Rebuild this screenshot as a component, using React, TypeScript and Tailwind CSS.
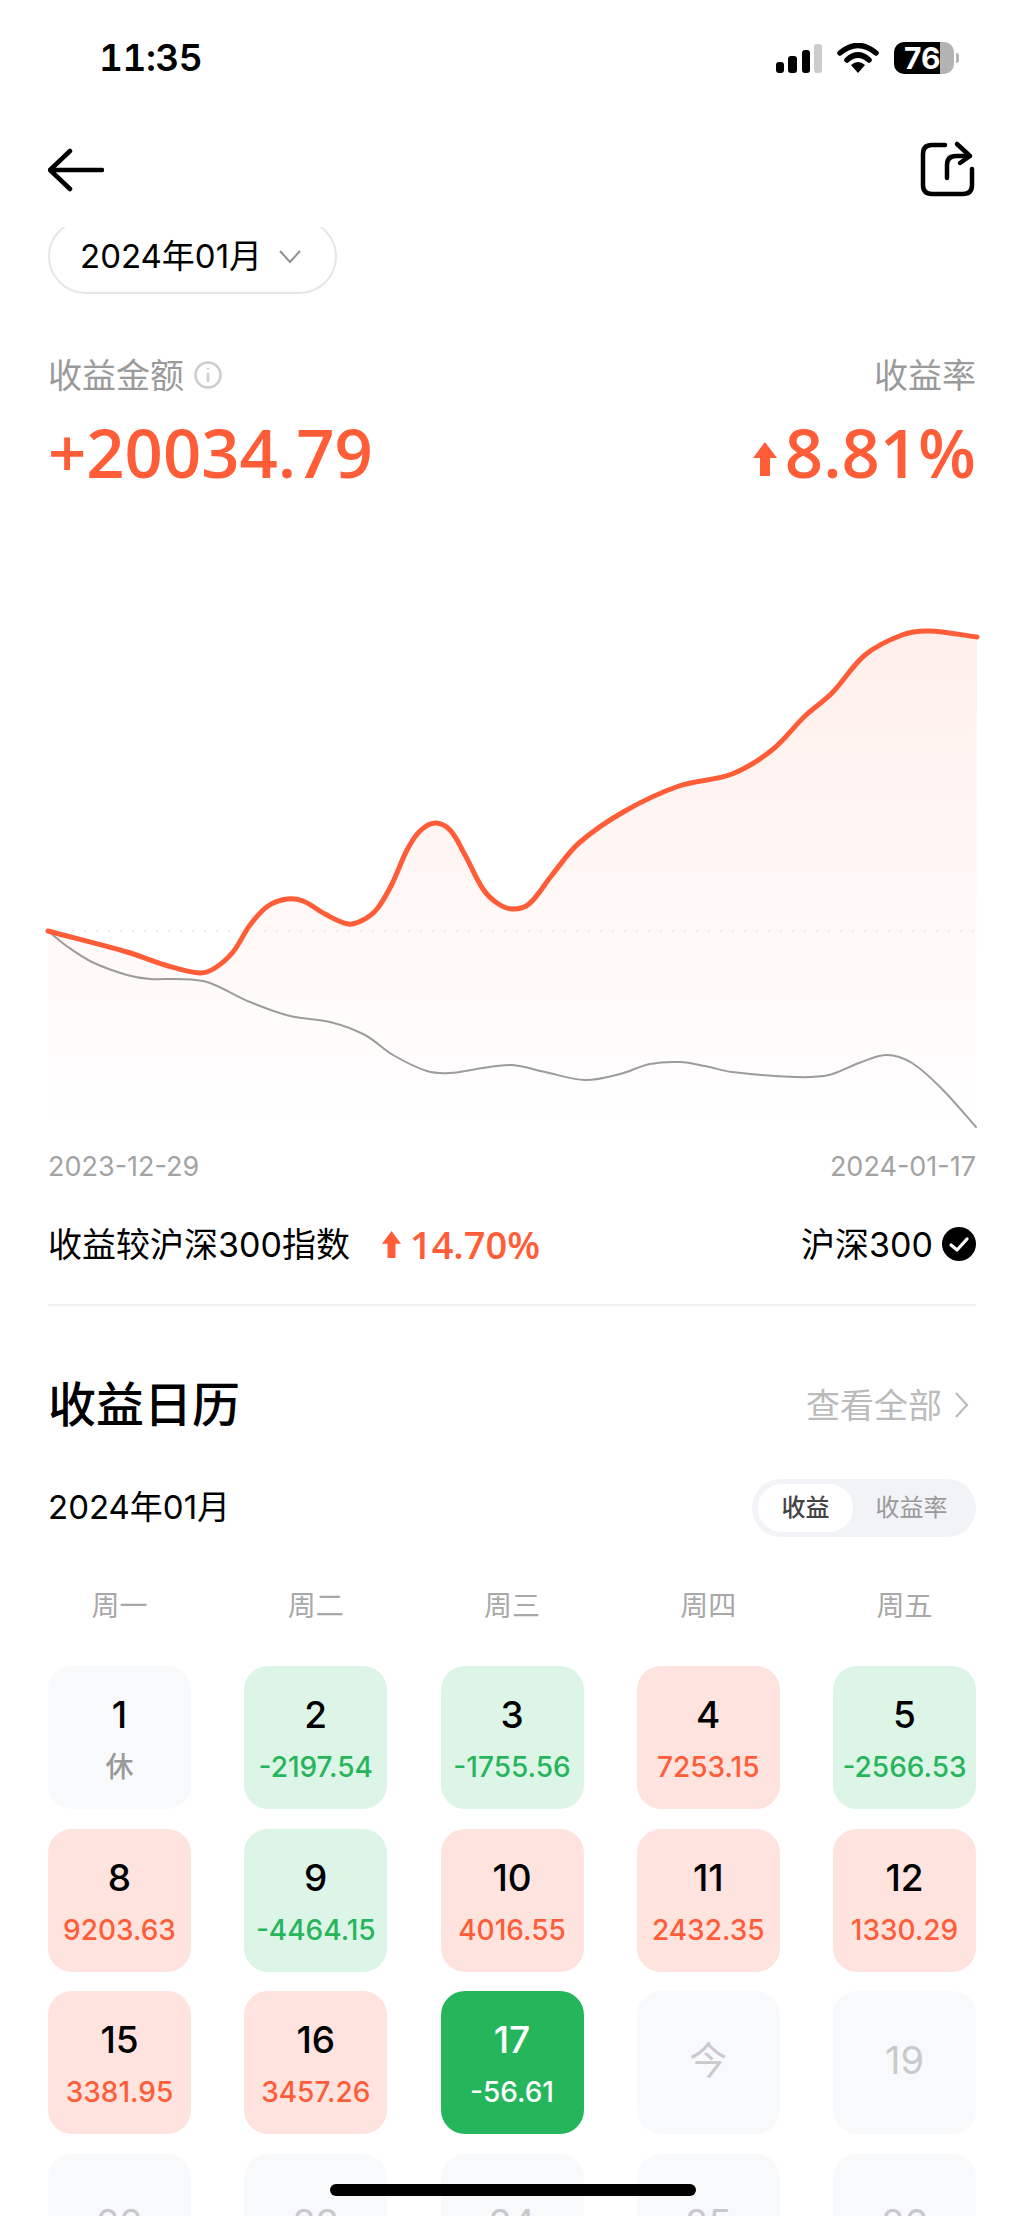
import React from 'react';

type Point = [number, number];

interface DayCell {
  day: string;
  value?: string;
  tone: 'rest' | 'red' | 'green' | 'active' | 'future' | 'today';
}

const redLine: Point[] = [
  [48, 931], [127, 952], [165, 965], [200, 973], [215, 968], [233, 952], [250, 925], [268, 906], [287, 899],
  [303, 901], [325, 914], [348, 924], [363, 920], [377, 909], [392, 884], [407, 850], [420, 831], [435, 823],
  [450, 830], [465, 855], [483, 889], [497, 903], [512, 909], [529, 904], [552, 875],
  [579, 843], [625, 811], [679, 786], [732, 774], [772, 750], [805, 716], [832, 693], [865, 655],
  [902, 635], [929, 631], [977, 637],
];

const grayLine: Point[] = [
  [48, 931], [68, 947], [92, 962], [127, 975], [150, 979], [177, 979], [207, 982], [250, 1002], [290, 1016],
  [330, 1022], [365, 1035], [393, 1055], [427, 1071], [450, 1073], [483, 1068], [512, 1065],
  [545, 1072], [585, 1080], [620, 1074], [650, 1064], [680, 1062], [705, 1066], [732, 1072],
  [795, 1077], [829, 1075], [859, 1063], [887, 1055], [912, 1063], [942, 1089], [976, 1127],
];

// tangent follows the neighbours, handle length follows the segment, so uneven spacing doesn't kink
const smooth = (pts: Point[]) => {
  const tangent = (i: number): Point => {
    const a = pts[i - 1] ?? pts[i];
    const b = pts[i + 1] ?? pts[i];
    const dx = b[0] - a[0];
    const dy = b[1] - a[1];
    const len = Math.hypot(dx, dy) || 1;
    return [dx / len, dy / len];
  };
  let d = `M${pts[0][0]} ${pts[0][1]}`;
  for (let i = 0; i < pts.length - 1; i++) {
    const p1 = pts[i];
    const p2 = pts[i + 1];
    const seg = Math.hypot(p2[0] - p1[0], p2[1] - p1[1]) / 3;
    const t1 = tangent(i);
    const t2 = tangent(i + 1);
    d += ` C${p1[0] + t1[0] * seg} ${p1[1] + t1[1] * seg} ${p2[0] - t2[0] * seg} ${p2[1] - t2[1] * seg} ${p2[0]} ${p2[1]}`;
  }
  return d;
};

const days: DayCell[] = [
  { day: '1', value: '休', tone: 'rest' },
  { day: '2', value: '-2197.54', tone: 'green' },
  { day: '3', value: '-1755.56', tone: 'green' },
  { day: '4', value: '7253.15', tone: 'red' },
  { day: '5', value: '-2566.53', tone: 'green' },
  { day: '8', value: '9203.63', tone: 'red' },
  { day: '9', value: '-4464.15', tone: 'green' },
  { day: '10', value: '4016.55', tone: 'red' },
  { day: '11', value: '2432.35', tone: 'red' },
  { day: '12', value: '1330.29', tone: 'red' },
  { day: '15', value: '3381.95', tone: 'red' },
  { day: '16', value: '3457.26', tone: 'red' },
  { day: '17', value: '-56.61', tone: 'active' },
  { day: '今', tone: 'today' },
  { day: '19', tone: 'future' },
  { day: '22', tone: 'future' },
  { day: '23', tone: 'future' },
  { day: '24', tone: 'future' },
  { day: '25', tone: 'future' },
  { day: '26', tone: 'future' },
];

const tileBg: Record<DayCell['tone'], string> = {
  rest: 'bg-[#f8f9fb]',
  red: 'bg-[#fee3df]',
  green: 'bg-[#ddf5e7]',
  active: 'bg-[#25b65c]',
  future: 'bg-[#f8f9fb]',
  today: 'bg-[#f8f9fb]',
};

const valueColor: Record<DayCell['tone'], string> = {
  rest: 'text-[#999999]',
  red: 'text-[#ff5c38]',
  green: 'text-[#27b55c]',
  active: 'text-white',
  future: '',
  today: '',
};

const Tile: React.FC<{ cell: DayCell }> = ({ cell }) => {
  if (!cell.value) {
    return (
      <div className={`h-[143px] rounded-[24px] flex items-center justify-center pb-[4px] text-[38px] text-[#c9c9cc] ${tileBg[cell.tone]}`}>
        {cell.day}
      </div>
    );
  }
  return (
    <div className={`h-[143px] rounded-[24px] flex flex-col items-center pt-[27px] ${tileBg[cell.tone]}`}>
      <div className={`text-[37px] font-medium leading-[44px] ${cell.tone === 'active' ? 'text-white' : 'text-black'}`}>{cell.day}</div>
      <div className={`mt-[12px] text-[28px] font-medium leading-[36px] ${valueColor[cell.tone]}`}>{cell.value}</div>
    </div>
  );
};

const UpArrow: React.FC<{ className: string }> = ({ className }) => (
  <svg viewBox="0 0 24 34" className={className}>
    <path d="M12 0 L24 16 H17 V34 H7 V16 H0 Z" fill="#ff5c38" strokeLinejoin="round" />
  </svg>
);

export default function App() {
  const redPath = smooth(redLine);
  return (
    <div className="relative w-[1024px] h-[2216px] overflow-hidden bg-white text-black font-['Inter','Noto_Sans_CJK_SC',sans-serif]">
      {/* status bar */}
      <div className="h-[116px] flex items-center justify-between pl-[99px] pr-[65px]">
        <div className="text-[37px] font-semibold tabular-nums tracking-[-0.5px]">11:35</div>
        <div className="flex items-center">
          <svg viewBox="0 0 46 29" className="w-[46px] h-[29px]">
            <rect x="0" y="18" width="8" height="11" rx="3" fill="#000" />
            <rect x="12" y="12" width="9" height="17" rx="3" fill="#000" />
            <rect x="26" y="6" width="8" height="23" rx="3" fill="#000" />
            <rect x="38" y="0" width="8" height="29" rx="3" fill="#cccccc" />
          </svg>
          <svg viewBox="0 0 42 30" className="w-[42px] h-[30px] ml-[15px]">
            <path d="M3 10 Q21 -5 39 10" fill="none" stroke="#000" strokeWidth="5.5" strokeLinecap="round" />
            <path d="M10 17 Q21 7 32 17" fill="none" stroke="#000" strokeWidth="5.5" strokeLinecap="round" />
            <path d="M14 22 Q21 16 28 22 L21 30 Z" fill="#000" />
          </svg>
          <div className="ml-[15px] w-[60px] h-[32px] rounded-[10px] bg-[linear-gradient(90deg,#000_77%,#b3b3b3_77%)] text-white text-[30px] font-bold leading-[32px] pl-[10px]">
            76
          </div>
          <div className="ml-[2px] w-[3px] h-[10px] rounded-r-full bg-[#b3b3b3]" />
        </div>
      </div>

      {/* nav */}
      <div className="h-[108px] flex items-center justify-between px-[48px]">
        <svg viewBox="48 148 56 44" className="w-[56px] h-[44px]">
          <path d="M70 151 L50 170 L70 189 M50 170 H102" fill="none" stroke="#000" strokeWidth="4.5" strokeLinecap="round" strokeLinejoin="round" />
        </svg>
        <svg viewBox="916 140 60 60" className="w-[60px] h-[60px]">
          <path d="M945 145 H932 Q923 145 923 154 V185 Q923 194 932 194 H963 Q972 194 972 185 V169" fill="none" stroke="#000" strokeWidth="4.5" strokeLinecap="round" />
          <path d="M947 178 V165 Q947 156 956 156 H970 M957 144 L970 156 L960 163" fill="none" stroke="#000" strokeWidth="4.5" strokeLinecap="round" strokeLinejoin="round" />
        </svg>
      </div>

      {/* month picker, top edge slides under the nav */}
      <div className="mt-[3px] h-[67px] overflow-hidden px-[48px]">
        <div className="-mt-[8px] w-[289px] h-[75px] rounded-full border-2 border-[#e6e6ea] flex items-center pl-[30px]">
          <span className="text-[33px]">2024年01月</span>
          <svg viewBox="0 0 22 14" className="ml-[17px] w-[22px] h-[14px]">
            <path d="M1 1 L11 12 L21 1" fill="none" stroke="#8e8e93" strokeWidth="2" />
          </svg>
        </div>
      </div>

      {/* summary */}
      <div className="mt-[59px] px-[48px] flex items-center justify-between h-[44px] text-[34px] text-[#9a9a9a]">
        <div className="flex items-center">
          <span>收益金额</span>
          <svg viewBox="0 0 28 28" className="ml-[10px] w-[28px] h-[28px]">
            <circle cx="14" cy="14" r="12.5" fill="none" stroke="#cccccc" strokeWidth="2.5" />
            <path d="M14 12 V21 M14 7 V8.5" fill="none" stroke="#cccccc" strokeWidth="2.5" />
          </svg>
        </div>
        <span>收益率</span>
      </div>
      <div className="mt-[15px] px-[48px] flex items-center justify-between h-[80px] text-[67px] leading-[80px] font-semibold text-[#ff5c38] font-['Open_Sans',sans-serif]">
        <span>+20034.79</span>
        <div className="flex items-center">
          <UpArrow className="w-[24px] h-[34px] mr-[8px] mt-[14px]" />
          <span>8.81%</span>
        </div>
      </div>

      {/* chart */}
      <svg viewBox="0 620 1024 520" className="block mt-[128px] w-[1024px] h-[520px]">
        <defs>
          <linearGradient id="area" x1="0" y1="630" x2="0" y2="1125" gradientUnits="userSpaceOnUse">
            <stop offset="0" stopColor="#ff5c38" stopOpacity="0.1" />
            <stop offset="1" stopColor="#ff5c38" stopOpacity="0" />
          </linearGradient>
        </defs>
        <path d={`${redPath} L976 1130 L48 1130 Z`} fill="url(#area)" />
        <line x1="72" y1="931" x2="976" y2="931" stroke="#ececec" strokeWidth="2" strokeDasharray="2 10" />
        <path d={smooth(grayLine)} fill="none" stroke="#9c9c9c" strokeWidth="2" strokeLinecap="round" />
        <path d={redPath} fill="none" stroke="#ff5c38" strokeWidth="5" strokeLinecap="round" />
      </svg>

      <div className="mt-[10px] h-[34px] px-[48px] flex items-center justify-between text-[27px] text-[#a3a3a3]">
        <span>2023-12-29</span>
        <span>2024-01-17</span>
      </div>

      {/* vs index */}
      <div className="mt-[38px] h-[44px] px-[48px] flex items-center justify-between text-[34px]">
        <div className="flex items-center">
          <span>收益较沪深300指数</span>
          <UpArrow className="ml-[32px] w-[19px] h-[27px]" />
          <span className="ml-[9px] text-[38px] font-semibold text-[#ff5c38] font-['Open_Sans',sans-serif]">14.70%</span>
        </div>
        <div className="flex items-center">
          <span>沪深300</span>
          <svg viewBox="0 0 34 34" className="ml-[9px] w-[34px] h-[34px]">
            <circle cx="17" cy="17" r="17" fill="#000" />
            <path d="M9 18 L15 23 L25 12" fill="none" stroke="#fff" strokeWidth="3.2" strokeLinecap="round" strokeLinejoin="round" />
          </svg>
        </div>
      </div>

      <div className="mt-[38px] mx-[48px] h-[2px] bg-[#f1f1f1]" />

      {/* calendar */}
      <div className="mt-[69px] h-[60px] px-[48px] flex items-center justify-between">
        <span className="text-[48px] font-medium">收益日历</span>
        <div className="flex items-center text-[34px] text-[#bbbbbb]">
          <span>查看全部</span>
          <svg viewBox="0 0 14 28" className="ml-[13px] mr-[7px] w-[14px] h-[28px]">
            <path d="M1 2 L12 14 L1 26" fill="none" stroke="#bbbbbb" strokeWidth="2.2" />
          </svg>
        </div>
      </div>

      <div className="mt-[44px] h-[58px] px-[48px] flex items-center justify-between">
        <span className="text-[33px]">2024年01月</span>
        <div className="w-[224px] h-[58px] rounded-full bg-[#f2f3f7] flex items-center px-[6px] text-[24px]">
          <div className="w-[95px] h-[48px] rounded-full bg-white flex items-center justify-center font-medium text-[#444444]">收益</div>
          <div className="flex-1 text-center text-[#999999]">收益率</div>
        </div>
      </div>

      <div className="mt-[49px] h-[40px] px-[48px] grid grid-cols-[repeat(5,143px)] justify-between text-[28px] text-[#a8a8a8] text-center leading-[40px]">
        <span>周一</span>
        <span>周二</span>
        <span>周三</span>
        <span>周四</span>
        <span>周五</span>
      </div>

      <div className="mt-[40px] px-[48px] grid grid-cols-[repeat(5,143px)] justify-between gap-y-[19.5px]">
        {days.map(cell => (
          <Tile key={cell.day} cell={cell} />
        ))}
      </div>

      {/* home indicator */}
      <div className="absolute left-[330px] top-[2184px] w-[366px] h-[12px] rounded-full bg-black" />
    </div>
  );
}
